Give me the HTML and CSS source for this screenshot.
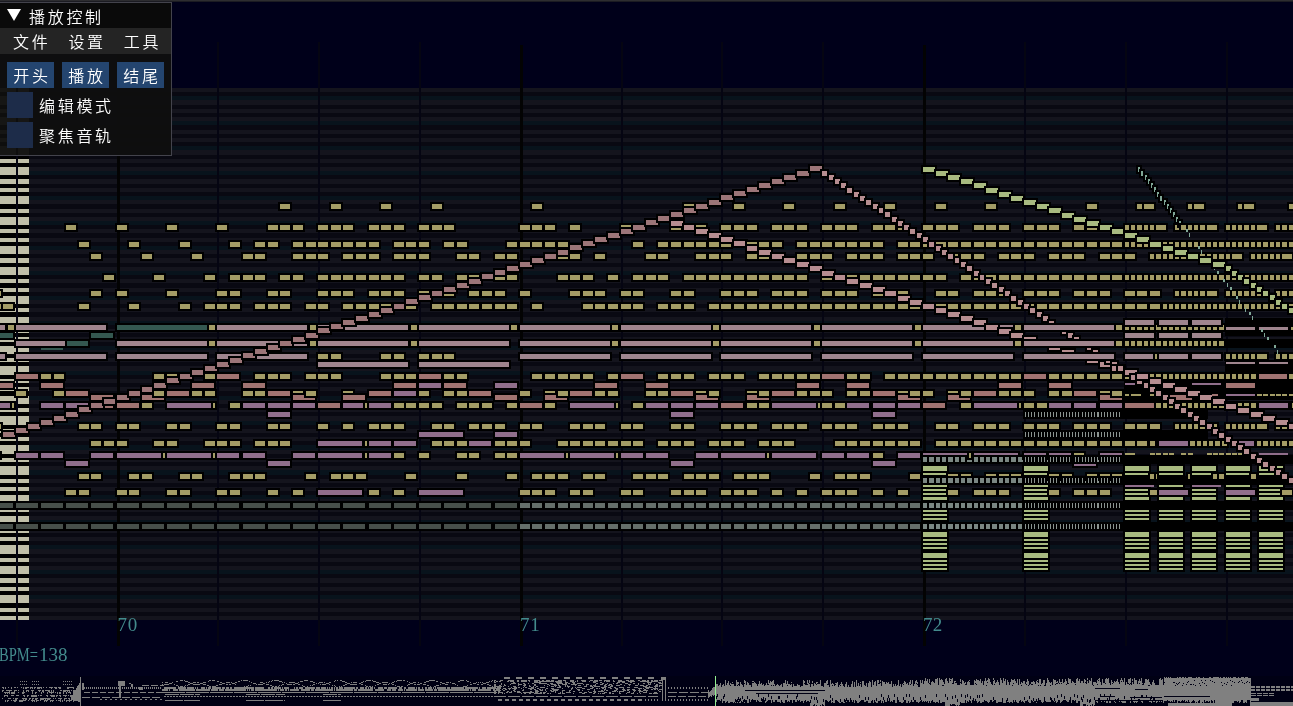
FILE: index.html
```html
<!DOCTYPE html>
<html lang="zh-CN">
<head>
<meta charset="utf-8">
<title>播放控制</title>
<link rel="stylesheet" href="styles.css">
</head>
<body>
<main class="stage">
  <canvas class="roll" id="roll" width="1293" height="706"></canvas>
  <svg class="labels" width="1293" height="706">
    <text x="117.5 127.7" y="630.5">70</text>
    <text x="520 530.2" y="630.5">71</text>
    <text x="923 932.7" y="630.5">72</text>
    <text x="-1" y="660.5" textLength="39" lengthAdjust="spacingAndGlyphs">BPM=</text>
    <text x="39" y="660.5">138</text>
  </svg>
  <section class="panel">
    <header class="title"><svg width="14" height="12"><path d="M0 0H14L7 12Z" fill="#fff"/></svg><span>播放控制</span></header>
    <nav class="menu"><span>文件</span><span>设置</span><span>工具</span></nav>
    <div class="body">
      <div class="buttons"><button>开头</button><button>播放</button><button>结尾</button></div>
      <label class="check"><i class="box"></i><span>编辑模式</span></label>
      <label class="check"><i class="box"></i><span>聚焦音轨</span></label>
    </div>
  </section>
</main>
<script src="roll.js"></script>
</body>
</html>
```
FILE: styles.css
```css
body { margin: 0; background: #00001a; overflow: hidden; }
.stage { position: relative; width: 1293px; height: 706px; }
.roll { display: block; }
.labels { position: absolute; left: 0; top: 0; font: 19px "Liberation Serif", serif; fill: #438b8d; }
.panel { position: absolute; left: -1px; top: 2px; width: 171px; height: 152px; border: 1px solid #43434c; background: rgba(15, 15, 15, .96); color: #fff; font: 350 16px "Noto Sans CJK SC", sans-serif; letter-spacing: 2.7px; }
.title { display: flex; align-items: center; height: 25px; padding-left: 7px; gap: 8px; background: #0a0a0a; }
.title svg { margin-bottom: 1px; }
.menu { display: flex; align-items: center; height: 26px; padding-left: 13px; gap: 18px; background: #242424; }
.body { display: flex; flex-direction: column; gap: 4px; padding: 8px 7px; }
.buttons { display: flex; gap: 8px; }
.buttons button { flex: none; width: 47px; height: 26px; padding: 1px 0 0 3px; border: 0; background: #24456f; color: #fff; font: inherit; letter-spacing: inherit; line-height: 25px; }
.check { display: flex; align-items: center; gap: 6px; height: 26px; }
.box { width: 26px; height: 26px; background: #1d2c49; }
.title span, .menu span, .check span { line-height: 26px; }
```
FILE: roll.js
```js
const ctx = document.getElementById('roll').getContext('2d');
const rect = (c, x, y, w, h) => { ctx.fillStyle = c; ctx.fillRect(x, y, w, h); };
const X = k => Math.floor(117.1 + 12.6015 * k);
const PITCH = 532 / 128;

/* background and pitch stripes */
rect('#00001a', 0, 0, 1293, 706);
rect('#2d2d30', 0, 0, 1293, 1);
rect('#1b1b22', 0, 1, 1293, 1);
const black = [1, 3, 6, 8, 10];
for (let p = 127; p >= 0; p--) {
  const top = Math.round(620 - PITCH * (p + 1)), h = Math.round(620 - PITCH * p) - top, n = p % 12;
  rect(black.includes(n) ? '#090912' : n === 5 || n === 11 ? '#08131c' : '#14141d', 0, top, 1293, h);
  rect(black.includes(n) ? '#000' : '#c0bfa9', 0, top, 29, h);
}
for (let k = -8; k < 96; k += 8) {
  if (k % 32 === 0) rect('#030303', X(k), 45, 3, 601);
  else rect('#050512', X(k), 42, 2, 604);
}

/* notes: each row is keyed by its y, each token is a step plus a kind */
const kinds = {
  '': ['#a39c66', 10, 1], y: ['#a39c66', 6, 1], s: ['#a39c66', 2, 1], h: ['#a39c66', 5, 1],
  L: ['#9f858e', 90, 0], l: ['#9f858e', 29, 2], r: ['#a07371', 22, 2], R: ['#a07371', 29, 2],
  p: ['#906e8b', 22, 2], P: ['#906e8b', 44, 2], V: ['#906e8b', 29, 2], g: ['#345850', 90, 0],
  G: ['#345850', 22, 0]
};
const rows = {
  204: '13 17 21 25 33 45 49 53 57 61 65 69 77 81h 81.5 85h 85.5 89h 89.5 93',
  225: '-4 0 4 8 12-14 16-18 20-22 24-26 32-34 36 40 44 46 48-50 52-54 56-58 60-62 64-66 68-70 72-74 76-78 80-82h 82.5 84-86h 86.5 88-90h 90.5 92-94h',
  242: '-3 1 5 9 11 12 14-20 22-24 26 27 31-35 41 43-48 50-52 54-60 62-79 80-94h',
  254: '-2 2 6 10 11 14-16 18-20 22-24 27 28 30 31 35 36 38 42 43 46-48 50 51 54-56 58-60 62-64 66-68 70-72 74-76 78-80 82-84h 84.5 85.5-88h 88.5 90-92h 92.5',
  275: '-1 3 7 9-11 13 14 16-22 24 25 27 28 30 31 35-37 39 41-43 45-54 56-65 67-79 80-94h',
  291: '-10 -2 0 4 8 9 12 13 16-18 20-22 24-26 28-30 32 36-38 40 41 44 45 48-50 52-54 56-58 60-62 65 66 68-70 72-74 76-78 80-82 84-86h 86.5 88-90h 90.5 92-94h',
  304: '-10 -9 -3 1 5 7-9 11-13 15 16 18-23 25-31 33 37-41 43-45 47-63 65-82 83-94h',
  325: '-16L -8.6y -8L 0g 7.33y 8L 15.33y 16L 23.33y 24L 31.33y 32L 39.33y 40L 47.33y 48L 55.33y 56L 63.33y 64L 71.33y 72L 79.33y 80-83.5h 84-87.5h',
  320: '80l 82.7l 85.35l',
  333: '-10G -2G 80l 82.7l 85.35l',
  341: '0L 7.33y 8L 15.33y 16L 23.33y 24L 32L 39.33y 40L 47.33y 48L 55.33y 56L 63.33y 64L 71.33y 72L 79.33y 80-87.5h',
  354: '-16L -8L 0L 8L 16 17 21 22 24-26 32L 40L 48L 56L 64L 72L 80l 82.4s 82.7l 85.35l 88-90h 90.5 92-94h',
  362: '16L 24L',
  374: '-8r -6 -5 3 4 7 8r 11-13 15-17 21-23 24r 26 27 33-37 39 40r 43-45 47-49 51-55 56r 58 59 61-71 72r 74-79 80-90h 90.65R 93h',
  383: '-10r -6r 6r 10r 22r 24p 26r 30p 38r 42r 54r 58r 70r 74r 88R',
  391: '-8 -5 -4r 3 4r 6 7 10 11 12r 14 15 18 20r 22p 24 26 27 28r 32 34 35 36r 38 39 42 43 44r 46 47 50 51 52r 54-56 58 59 60r 62-64 66 67 68r 70-72 74 75 76r 78 79',
  395: '-2r 2r 14r 18r 30r 34r 46r 50r 62r 66r 78r 83.6r',
  403: '-10p -8.3s -6p -4p -2r 0r 2 4P 7.65s 9 10p 12p 14p 16r 18p 19.7s 20p 22-25 27-29 31 32r 34 36P 39.65s 41 42p 44p 46p 48r 50 51 52P 55.65s 56 57 58p 60p 62p 64r 67 68P 71.65s 72 73 74p 76p 78p 80R 82.5-90h 90.65V 93.3h',
  412: '12p 44p 60p',
  424: '-10 -3 -2 0 1 4 5 8 9 12 13 16 18 20-22 25 26 28-30 32 33 36-38 40 41 44 45 48-50 52-54 56-58 60-62 65 66 68-70 72-74 76-78 80-82 84-86h 86.5 88-90h 90.5 92-94h',
  432: '24P 30p',
  441: '-2 -1 0 3 4 7-9 11-13 16P 19.7s 20p 22p 25-27 28p 30-32 35-41 43-45 47-49 51-53 57-63 65-79 80 81 82h 82.7V 85.2-88h 88.5p 90.5-94h',
  453: '-11p -8p -6p -2p 0P 3.65s 4P 7.65s 8p 10p 14p 16P 19.7s 20p 22 24 27 28 30 31 32P 35.65s 36P 39.65s 40p 42p 46p 48P 51.65s 52P 56p 58p 60 62p 64P 67.65s 68P 72p 74p 76 78p',
  461: '-4p 12p 44p 60p 76p',
  474: '-3 -2 1 2 5 6 9-11 15 17-19 23 27 31 33-35 37 38 41-43 45-47 49-51 55 57-59 63 66 67 69-71 74 75 77-79 82h 82.5h 85h 87-88h 90h',
  490: '-4 -3 0 1 4 5 8 9 12 14 16P 20 22 24P 32-34 36 37 40 41 44-46 48-50 52 54 56-58 60 62 66 68-70 74 76-78 82 82.7V 88V 92.5 93.5h'
};
const notes = [];
const add = (k, x, y, w, h, c, b, z) => notes.push({ k, x, y, w, h, c, b, z });
for (const y in rows) {
  for (const token of rows[y].split(' ')) {
    const [, a, b, kind] = token.match(/^(-?[\d.]+)(?:-([\d.]+))?([a-zA-Z]?)$/);
    const [c, w, z] = kinds[kind];
    for (let k = +a; k <= (b ? +b : +a); k += kind === 'h' ? 0.5 : 1) {
      const order = token === '72L' ? 79.2 : y === '320' ? k + 2.4 : k;
      add(order, X(k), +y, w, 5, c, 2, z);
    }
  }
}
add(-8, 16, 341, 49, 5, '#9f858e', 2, 0);
add(-4, 67, 341, 21, 5, '#345850', 2, 0);
add(-3.9, 41, 348, 22, 2, '#345850', 0, 0);

/* pulsing rows along the bottom */
for (const y of [503, 524]) {
  for (let k = -10; k < 32; k += 2) add(k, X(k), y, 22, 5, '#474f4a', 2, 3);
  for (let k = 32; k < 64; k++) add(k, X(k), y, 10, 5, '#656f6a', 2, 3);
}
for (const y of [457, 478, 503, 524, 412, 432]) {
  if (y > 440) for (let k = 64; k < 72; k += 0.5) add(k, X(k), y, 5, 5, '#7a8682', 2, 8);
  for (let i = 0; i < 32; i++) {
    const k = 72 + i / 4;
    add(k, X(k) + 1, y, i % 8 === 7 ? 2 : 1, 5, '#8a938f', 2, 8);
  }
  add(79.95, 1123, y - 2, y < 440 ? 85 : 170, 9, '#000', 0, 4);
}
add(79.9, 1124, 377, 102, 25, '#000', 0, 0);
add(79.9, 1124, 318, 67, 2, '#000', 0, 0);
add(87.9, 1225, 318, 68, 18, '#000', 0, 0);
add(87.9, 1225, 339, 68, 9, '#000', 0, 0);
add(87.9, 1225, 360, 68, 14, '#000', 0, 0);
add(87.9, 1225, 380, 68, 20, '#000', 0, 0);

/* parts of covered notes that stay visible */
const slivers = [
  ['#9f858e', 88, 327, 29, 3], ['#9f858e', 90.65, 327, 29, 3], ['#a39c66', 93.2, 327, 2, 3],
  ['#9f858e', 88, 362, 29, 2], ['#9f858e', 90.65, 362, 29, 2],
  ['#906e8b', 80, 383, 11, 2], ['#906e8b', 85.35, 383, 29, 2],
  ['#a39c66', 80, 394, 4, 2], ['#a39c66', 80.5, 394, 10, 2], ['#a39c66', 82, 394, 4, 2],
  ['#a07371', 86.9, 394, 6, 2], ['#906e8b', 88, 394, 29, 2]
];
for (let k = 90.5; k < 94; k += 0.5) slivers.push(['#a39c66', k, 394, 5, 2]);
for (let k = 80; k < 94; k += 0.5) {
  if (k < 80.5 || (k > 81.9 && k < 83.9) || (k > 84 && k < 85.2) || (k > 86 && k < 90.5)) slivers.push(['#a39c66', k, 453, k < 81 ? 10 : 5, 2]);
}
slivers.push(['#906e8b', 90.65, 453, 29, 2]);
for (const [c, k, y, w, h] of slivers) add(k, X(k), y, w, h, c, 0, 4.5);

/* chords */
const bars = [[466, 5], [473, 2], [485, 2], [489, 2], [493, 2], [497, 3], [510, 2], [514, 2], [518, 2], [532, 5], [539, 2], [543, 2], [547, 2], [553, 5], [560, 2], [564, 2], [568, 2]];
for (const k of [64, 72, 80, 82.7, 85.35, 88, 90.65]) {
  add(k, X(k) - 2, 464, 28, 108, '#000', 0, 7);
  for (const [y, h] of bars) add(k, X(k), y, 24, h, '#a8ba80', 0, 7.1);
}
for (const k of [80, 85.35]) add(k, X(k), 485, 29, 2, '#906e8b', 0, 7.2);
for (const k of [82.7, 88]) {
  add(k, X(k) - 2, 488, 33, 9, '#000', 0, 7.3);
  add(k, X(k), 490, 29, 5, '#906e8b', 0, 7.4);
}

/* chromatic runs */
const run = (k0, y0, n, step, dir, w, c) => {
  for (let i = 0; i < n; i++) {
    const k = k0 + i * step;
    add(k < 80 ? k : k + 0.6, X(k), Math.floor(y0 + dir * PITCH * i), w, 5, c, 2, 7.5);
  }
};
run(-9, 432.9, 65, 1, -1, 12, '#9c7578');
run(56, 171.4, 77, 0.5, 1, 5, '#b68d90');
run(44, 221.2, 50, 1, 1, 12, '#b68d90');
run(64, 167.3, 24, 1, 1, 12, '#a8ba80');
run(88, 266.9, 12, 0.5, 1, 5, '#a8ba80');
const peeks = [15, 16, 19, 20, 24, 25, 27, 28, 29, 31, 32, 34, 35, 36, 39, 40, 41, 43, 44];
for (let i = 0; i < 45; i++) {
  const k = 81 + i / 4, y = Math.floor(167.2 + PITCH * i);
  if (i < 14) add(k, X(k) + 1, y, 2, 5, '#7fa696', 2, 5);
  else if (peeks.includes(i)) add(k + 0.3, X(k) + 1, y, i % 2 ? 2 : 1, i % 2 ? 3 : 4, '#7fa696', 0, 5);
}

notes.sort((a, b) => a.k - b.k || a.z - b.z);
for (const n of notes) {
  if (n.b) rect('#000', n.x - 2, n.y - 2, n.w + 4, 9);
  rect(n.c, n.x, n.y, n.w, n.h);
}

/* song overview */
let seed = 7;
const rnd = () => (seed = (seed * 16807) % 2147483647) / 2147483647;
const G = '#808080';
rect('#000014', 0, 676, 1293, 30);
const dash = (x0, x1, y, on, off, h = 1) => { for (let x = x0; x < x1; x += on + off) rect(G, x, y, Math.min(on, x1 - x), h); };
for (const [a, b] of [[20, 28], [32, 39], [63, 73]]) { dash(a, b, 681, 1, 1); dash(a, b, 684, 1, 1); }
for (const y of [687, 690, 692, 695, 698, 700]) for (let x = 2; x < 75; x++) if (rnd() < .62) rect(G, x, y, 1, rnd() < .5 ? 2 : 1);
for (let i = 0; i < 10; i++) rect(G, 71 + i, 697 - i * 1.7 | 0, 1, 3 + i * 2);
rect(G, 80, 677, 1, 29);
rect(G, 82, 683, 2, 7);
dash(84, 162, 687, 1, 1, 2); dash(84, 162, 692, 6, 2); dash(82, 162, 697, 8, 2); dash(100, 162, 699, 2, 3);
rect(G, 118, 681, 7, 5); rect(G, 119, 686, 2, 12); dash(142, 164, 685, 7, 2);
rect(G, 129, 683, 2, 1); rect(G, 131, 684, 2, 3); rect(G, 139, 687, 4, 3);
for (let x = 162; x < 500; x++) {
  const w = Math.round(2 * Math.sin(x / 5));
  if (rnd() < .75) rect(G, x, 682 + w, 1, 1);
  if (rnd() < .7) rect(G, x, 684 - w, 1, 1);
  if (rnd() < .75) rect(G, x, 687, 1, 2);
  if (rnd() < .83) rect(G, x, 689, 1, 2);
}
dash(162, 500, 692, 23, 1); dash(164, 500, 696, 2, 1);
for (const [a, b] of [[165, 200], [246, 285], [323, 341]]) { dash(a, b, 694, 14, 1); dash(a, b, 700, 18, 1); }
for (let y = 680; y < 694; y++) {
  for (let x = 494; x < 660; x += 2 + (rnd() * 4 | 0)) if (rnd() < .62) rect(G, x, y, 1 + (rnd() * 3 | 0), 1);
}
dash(504, 660, 677, 6, 6, 2); dash(510, 660, 680, 4, 8, 2);
dash(494, 658, 696, 12, 2); dash(498, 645, 699, 4, 3, 2); dash(645, 658, 699, 1, 2, 2);
rect(G, 661, 677, 5, 3); rect(G, 662, 677, 1, 24); rect(G, 665, 677, 1, 24);
dash(668, 710, 687, 1, 2, 2); dash(668, 710, 692, 9, 2); dash(668, 710, 696, 8, 2); dash(668, 710, 699, 1, 2, 2);
for (let x = 708; x < 1251; x++) {
  const full = x > 1163, edge = x < 716 ? 5 : 0;
  const top = (full ? 677 : x < 920 ? 680 : 678) + edge + rnd() * (full ? 2 : 8) | 0;
  const bot = (x % 135 < 15 ? 704 : 700) - edge + rnd() * 4 | 0;
  rect(G, x, top, 1, bot - top);
  if (rnd() < .4) rect('#000014', x, 680 + rnd() * 6 | 0, 1, 1);
  if (rnd() < .3 && !full) rect('#000014', x, 694 + rnd() * 7 | 0, 1, 3);
}
for (const [a, b, y] of [[745, 825, 690], [756, 818, 693], [1095, 1120, 688], [1100, 1115, 696], [1135, 1148, 689], [1130, 1162, 697], [1164, 1210, 696], [1095, 1162, 700]]) rect('#000014', a, y, b - a, 1);
dash(1251, 1293, 686, 4, 1, 2); dash(1251, 1293, 689, 4, 1, 2); dash(1251, 1274, 693, 5, 1); dash(1251, 1274, 695, 5, 1);
rect(G, 1250, 698, 9, 3); rect(G, 1250, 702, 43, 4); rect(G, 1168, 703, 64, 3);
rect('#90ee90', 715, 676, 1, 30);
```
